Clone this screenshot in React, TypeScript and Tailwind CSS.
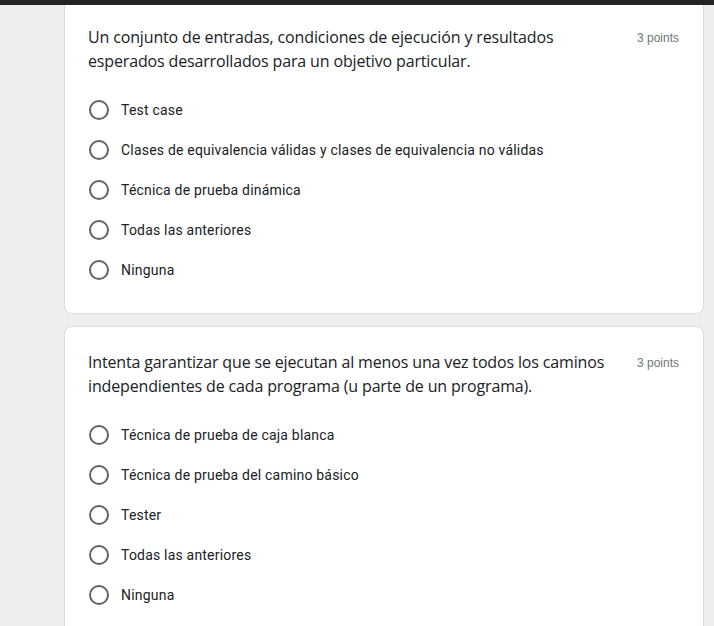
import React from "react";

type Question = {
  title: string;
  points: string;
  options: string[];
  clipTop?: boolean;
};

const questions: Question[] = [
  {
    title:
      "Un conjunto de entradas, condiciones de ejecución y resultados esperados desarrollados para un objetivo particular.",
    points: "3 points",
    options: [
      "Test case",
      "Clases de equivalencia válidas y clases de equivalencia no válidas",
      "Técnica de prueba dinámica",
      "Todas las anteriores",
      "Ninguna",
    ],
    clipTop: true,
  },
  {
    title:
      "Intenta garantizar que se ejecutan al menos una vez todos los caminos independientes de cada programa (u parte de un programa).",
    points: "3 points",
    options: [
      "Técnica de prueba de caja blanca",
      "Técnica de prueba del camino básico",
      "Tester",
      "Todas las anteriores",
      "Ninguna",
    ],
  },
];

function QuestionCard({ q }: { q: Question }) {
  return (
    <div
      className={
        q.clipTop
          ? "w-[640px] bg-white border border-t-0 border-[#dadce0] rounded-b-lg pl-[23px] pr-6 pt-5 pb-[23px]"
          : "w-[640px] bg-white border border-[#dadce0] rounded-lg pl-[23px] pr-6 pt-[23px] pb-[23px]"
      }
    >
      {/* Title row: question on left, points on right */}
      <div className="flex items-start gap-4">
        <div className="flex-1 text-[16px] leading-6 tracking-[-0.15px] text-[#202124] font-['Open_Sans',Arial,sans-serif]">
          {q.title}
        </div>
        <div className="pt-px text-[12px] leading-6 text-[#70757a] font-['Liberation_Sans',Arial,sans-serif] whitespace-nowrap">
          {q.points}
        </div>
      </div>

      {/* Options */}
      <div className="mt-[17px] flex flex-col">
        {q.options.map((opt) => (
          <label key={opt} className="flex items-center h-10 gap-3 cursor-pointer">
            <span className="ml-px w-5 h-5 rounded-full border-2 border-[#5f6368] shrink-0" />
            <span className="text-[14px] tracking-[0.2px] text-[#202124] font-['Roboto',Arial,sans-serif]">
              {opt}
            </span>
          </label>
        ))}
      </div>
    </div>
  );
}

export default function App() {
  return (
    <div className="min-h-[626px] w-[714px] bg-[#eeeeee] overflow-hidden">
      <div className="h-[5px] bg-[#232327]" />
      <div className="ml-16 flex flex-col gap-3">
        {questions.map((q) => (
          <QuestionCard key={q.title} q={q} />
        ))}
      </div>
    </div>
  );
}
